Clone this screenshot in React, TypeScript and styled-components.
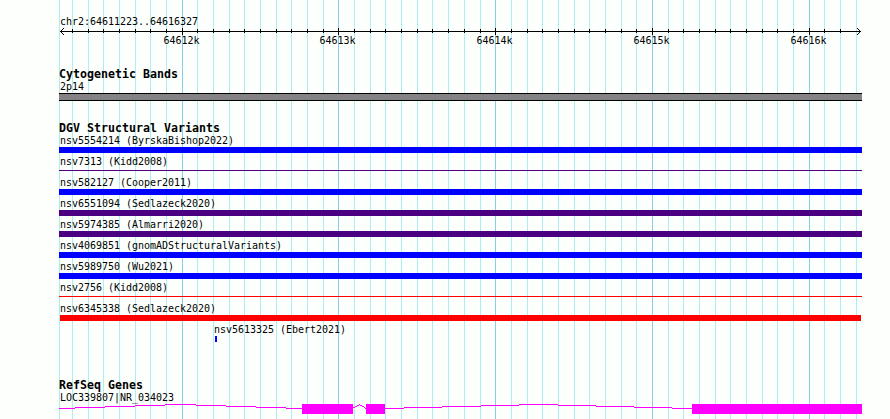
import React from 'react';
import styled, { createGlobalStyle } from 'styled-components';

type Glyph = 'bar' | 'line';

interface Variant {
  id: string;
  study: string;
  color: string;
  glyph: Glyph;
  start?: number;
  width?: number;
}

const TRACK_LEFT = 59;
const TRACK_WIDTH = 803;

// one grid line every 100 bp, the darker ones every 1000 bp
const FIRST_TICK = 72.35;
const TICK_STEP = 15.68;
const ticks = Array.from({ length: 51 }, (_, i) => ({
  x: Math.floor(FIRST_TICK + TICK_STEP * i) - TRACK_LEFT,
  major: i % 10 === 7,
  label: `${64612 + (i - 7) / 10}k`,
}));

const BLUE = '#0000ff';
const INDIGO = '#4b0082';
const RED = '#ff0000';

const variants: Variant[] = [
  { id: 'nsv5554214', study: 'ByrskaBishop2022', color: BLUE, glyph: 'bar' },
  { id: 'nsv7313', study: 'Kidd2008', color: INDIGO, glyph: 'line' },
  { id: 'nsv582127', study: 'Cooper2011', color: BLUE, glyph: 'bar' },
  { id: 'nsv6551094', study: 'Sedlazeck2020', color: INDIGO, glyph: 'bar' },
  { id: 'nsv5974385', study: 'Almarri2020', color: INDIGO, glyph: 'bar' },
  { id: 'nsv4069851', study: 'gnomADStructuralVariants', color: BLUE, glyph: 'bar' },
  { id: 'nsv5989750', study: 'Wu2021', color: BLUE, glyph: 'bar' },
  { id: 'nsv2756', study: 'Kidd2008', color: RED, glyph: 'line' },
  { id: 'nsv6345338', study: 'Sedlazeck2020', color: RED, glyph: 'bar', start: 1, width: 801 },
  { id: 'nsv5613325', study: 'Ebert2021', color: BLUE, glyph: 'bar', start: 156, width: 2 },
];

// [from, to, y] in track coordinates
const introns = [
  [0, 16, 4], [16, 46, 3], [46, 76, 2], [76, 106, 1], [106, 137, 0],
  [137, 167, 1], [167, 197, 2], [197, 227, 3], [227, 243, 4],
  [294, 296, 3], [296, 298, 2], [298, 300, 1], [300, 301, 0],
  [301, 303, 1], [303, 305, 2], [305, 306, 3], [306, 307, 4],
  [326, 345, 4], [345, 383, 3], [383, 422, 2], [422, 460, 1], [460, 499, 0],
  [499, 537, 1], [537, 575, 2], [575, 613, 3], [613, 633, 4],
];
const exons = [[243, 294], [307, 326], [633, 803]];

const Grid = () => (
  <GridLayer width={TRACK_WIDTH} height={419} shapeRendering="crispEdges">
    <rect x={0} y={0} width={1} height={419} fill="#afeeee" />
    {ticks.map(({ x, major }) => (
      <rect key={x} x={x} y={0} width={1} height={419} fill={major ? '#87ceeb' : '#afeeee'} />
    ))}
  </GridLayer>
);

const Ruler = () => (
  <Drawing width={TRACK_WIDTH} height={22} shapeRendering="crispEdges">
    <rect x={1} y={4} width={801} height={1} />
    {[1, 2, 3].map((d) => (
      <g key={d}>
        <rect x={1 + d} y={4 - d} width={1} height={1} />
        <rect x={1 + d} y={4 + d} width={1} height={1} />
        <rect x={801 - d} y={4 - d} width={1} height={1} />
        <rect x={801 - d} y={4 + d} width={1} height={1} />
      </g>
    ))}
    {ticks.map(({ x, major, label }) => (
      <g key={x}>
        {x < 797 && <rect x={x} y={major ? 1 : 2} width={1} height={major ? 7 : 4} />}
        {major && <ScaleText x={x - 18.5} y={17}>{label}</ScaleText>}
      </g>
    ))}
  </Drawing>
);

const Gene = () => (
  <Drawing width={TRACK_WIDTH} height={15} fill="#ff00ff" shapeRendering="crispEdges">
    {introns.map(([from, to, y]) => (
      <rect key={from} x={from} y={y} width={to - from} height={1} />
    ))}
    {exons.map(([from, to]) => (
      <rect key={from} x={from} y={0} width={to - from} height={10} />
    ))}
  </Drawing>
);

const App = () => (
  <>
    <GlobalStyle />
    <Browser>
      <Grid />
      <Region>
        <RegionName>chr2:64611223..64616327</RegionName>
        <Ruler />
      </Region>
      <Bands>
        <Title>Cytogenetic Bands</Title>
        <Label>2p14</Label>
        <Band />
      </Bands>
      <Variants>
        <Title>DGV Structural Variants</Title>
        {variants.map(({ id, study, color, glyph, start = 0, width = TRACK_WIDTH }) => (
          <VariantRow key={id}>
            <Label $inset={Math.max(1, start - 1)}>{`${id} (${study})`}</Label>
            <Bar $color={color} $glyph={glyph} $start={start} $width={width} />
          </VariantRow>
        ))}
      </Variants>
      <Genes>
        <Title>RefSeq Genes</Title>
        <Label>LOC339807|NR_034023</Label>
        <Gene />
      </Genes>
    </Browser>
  </>
);
export default App;

const GlobalStyle = createGlobalStyle`
  body {
    margin: 0;
    background: #fdfffc;
    overflow: hidden;
  }
`;
const Browser = styled.main`
  position: relative;
  box-sizing: border-box;
  width: 890px;
  height: 419px;
  padding-left: ${TRACK_LEFT}px;
  overflow: hidden;
  color: #000;
  font-family: 'DejaVu Sans Mono', 'Liberation Mono', monospace;
`;
const GridLayer = styled.svg`
  position: absolute;
  top: 0;
  left: ${TRACK_LEFT}px;
  z-index: -1;
`;
const Drawing = styled.svg`
  display: block;
`;
const ScaleText = styled.text`
  font-size: 10px;
  letter-spacing: -0.02px;
`;
const Region = styled.section`
  box-sizing: border-box;
  height: 66px;
  padding-top: 13px;
`;
const Bands = styled.section`
  height: 54px;
`;
const Variants = styled.section`
  height: 257px;
`;
const Genes = styled.section`
  height: 42px;
`;
const Title = styled.h2`
  height: 12px;
  margin: 0;
  font-size: 11.6px;
  font-weight: bold;
  line-height: 16px;
  letter-spacing: 0.016px;
  white-space: pre;
`;
const Label = styled.div<{ $inset?: number }>`
  height: 15px;
  padding-left: ${({ $inset = 1 }) => $inset}px;
  font-size: 10px;
  line-height: 17px;
  letter-spacing: -0.02px;
  white-space: pre;
`;
const RegionName = styled(Label)`
  height: 14px;
`;
const Band = styled.div`
  box-sizing: border-box;
  width: ${TRACK_WIDTH}px;
  height: 8px;
  border-top: 1px solid #000;
  border-bottom: 1px solid #000;
  background: #848284;
`;
const VariantRow = styled.div`
  height: 21px;
`;
const Bar = styled.div<{ $color: string; $glyph: Glyph; $start: number; $width: number }>`
  width: ${({ $width }) => $width}px;
  height: ${({ $glyph }) => ($glyph === 'line' ? 1 : 6)}px;
  margin: ${({ $glyph }) => ($glyph === 'line' ? 2 : 0)}px 0 0 ${({ $start }) => $start}px;
  background: ${({ $color }) => $color};
`;
